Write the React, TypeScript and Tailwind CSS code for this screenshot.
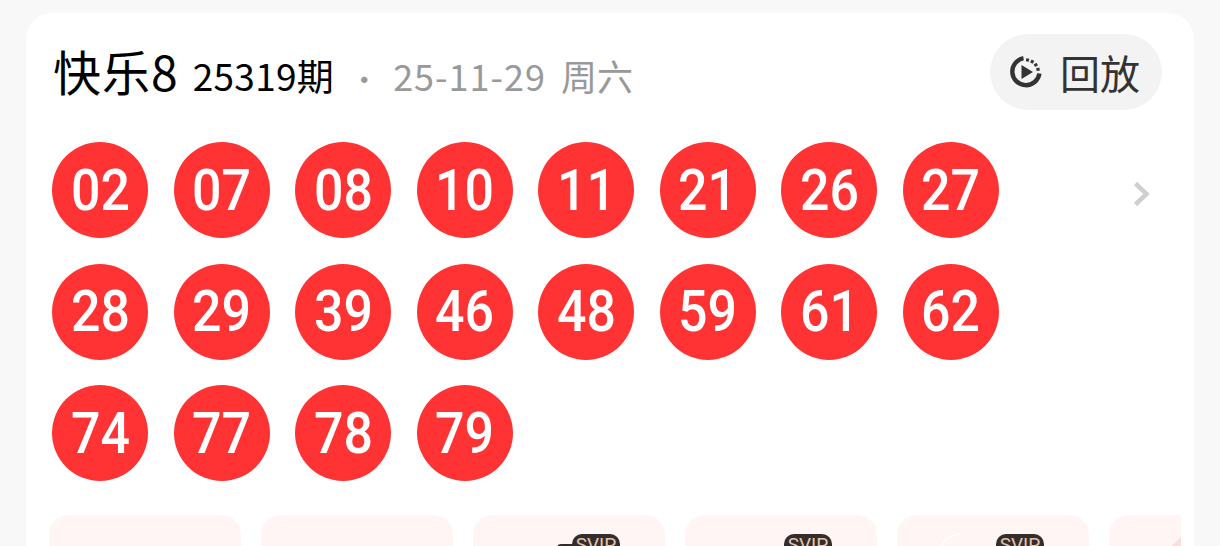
const rows = ["02","07","08","10","11","21","26","27","28","29","39","46","48","59","61","62","74","77","78","79"];

function ReplayIcon() {
  return (
    <svg width="34" height="34" viewBox="0 0 34 34" fill="none" className="shrink-0">
      <path d="M14.5 3.2A13.6 13.6 0 1 0 30.4 18.5" stroke="#333" strokeWidth="4.4" />
      <path d="M18.8 3.4l-.5 3.2M24 5.2l-1.7 2.8M28.2 9l-2.8 1.7M30.6 14l-3.2.6" stroke="#333" strokeWidth="3" />
      <path d="M12.5 10l11.5 7-11.5 7z" fill="#333" />
    </svg>
  );
}

function Ball({ n }: { n: string }) {
  return (
    <div className="flex h-24 w-24 items-center justify-center rounded-full bg-[#ff3333] text-white">
      <span className="scale-x-[0.91] font-['Roboto',sans-serif] text-[57px] leading-none font-medium">{n}</span>
    </div>
  );
}

function Promo({ svip, accent, dark, arc }: { svip?: boolean; accent?: boolean; dark?: boolean; arc?: boolean }) {
  return (
    <div className="relative h-[60px] w-[192px] shrink-0 overflow-hidden rounded-[20px] bg-[#fef5f4]">
      {arc && (
        <svg width="40" height="31" viewBox="0 0 40 31" fill="none" className="absolute top-0 left-[40px]">
          <path d="M4 31C8 24 14 20 24 19" stroke="#ffffff" strokeWidth="1.5" />
        </svg>
      )}
      {dark && <div className="absolute top-[29px] left-[84px] h-4 w-5 rounded-t-[4px] bg-[#332d2b]" />}
      {svip && (
        <div className="absolute top-[19px] left-[99px] flex h-6 w-12 items-start justify-center rounded-[10px] bg-[#332d2b]">
          <span className="font-['Roboto',sans-serif] text-[19px] leading-[22px] text-[#e8c4ae]">SVIP</span>
        </div>
      )}
      {accent && <div className="absolute top-[20px] left-[65px] h-[30px] w-[30px] rotate-45 bg-[#fbdfe0]" />}
    </div>
  );
}

export default function App() {
  return (
    <div className="h-[546px] w-[1220px] overflow-hidden bg-[#f8f8f8] pt-[13px] pl-[26px] font-['Noto_Sans_CJK_SC',sans-serif]">
      <div className="h-[600px] w-[1168px] rounded-t-[26px] bg-white">
        <div className="flex h-[129px] items-start justify-between pt-[21px] pr-[32px] pl-[27px]">
          <div className="flex items-baseline pt-[4px] whitespace-nowrap">
            <span className="text-[48px] leading-[64px] tracking-[1px] text-black">快乐8</span>
            <span className="ml-[14px] text-[37px] tracking-[0.3px] text-black">25319期</span>
            <span className="ml-[15px] text-[30px] text-[#999]">·</span>
            <span className="ml-[14px] text-[36px] tracking-[1px] text-[#999]">25-11-29</span>
            <span className="ml-[15px] text-[36px] text-[#999]">周六</span>
          </div>
          <div className="flex h-[76px] w-[172px] items-center gap-[17px] rounded-full bg-[#f3f3f3] pl-[19px]">
            <ReplayIcon />
            <span className="text-[40px] leading-none text-[#333]">回放</span>
          </div>
        </div>
        <div className="flex items-start justify-between pr-[42px] pl-[26px]">
          <div className="grid grid-cols-[repeat(8,96px)] gap-x-[25.5px] gap-y-[25.67px]">
            {rows.map((n) => <Ball key={n} n={n} />)}
          </div>
          <svg width="20" height="30" viewBox="0 0 20 30" fill="none" className="mt-[37px]">
            <path d="M3.5 4.5l11 10.5-11 10.5" stroke="#cfcfcf" strokeWidth="4.5" />
          </svg>
        </div>
        <div className="mt-[34px] ml-[23px] flex w-[1132px] gap-[20px] overflow-hidden">
          <Promo />
          <Promo />
          <Promo svip dark />
          <Promo svip />
          <Promo svip arc />
          <Promo accent />
        </div>
      </div>
    </div>
  );
}
